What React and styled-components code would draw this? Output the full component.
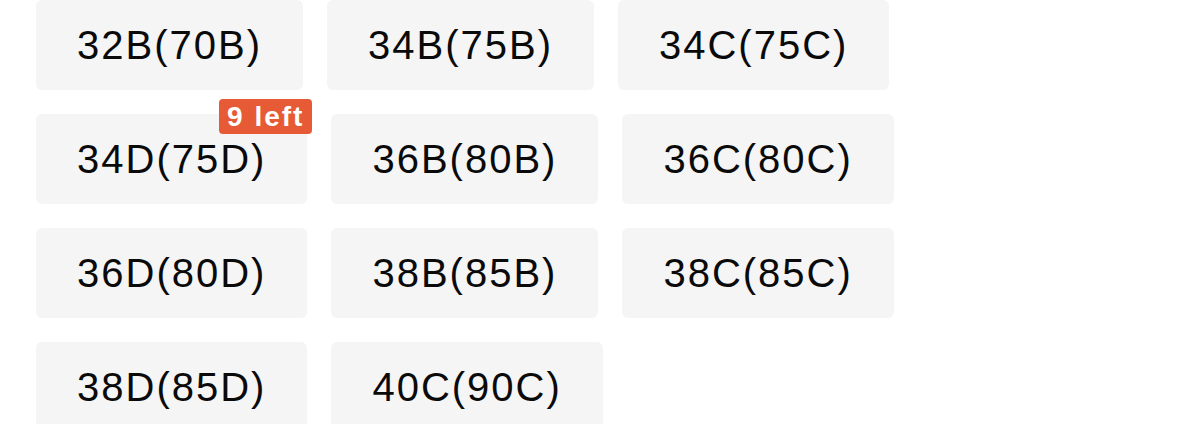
import styled, { createGlobalStyle } from 'styled-components';

const GlobalStyle = createGlobalStyle`
  body {
    margin: 0;
    background: #ffffff;
    font-family: "Liberation Sans", Arial, sans-serif;
  }
`;

const SizeGrid = styled.div`
  display: flex;
  flex-wrap: wrap;
  align-content: flex-start;
  gap: 24px 24px;
  padding: 0 0 0 36px;
  width: 900px;
`;

const SizeChip = styled.button`
  position: relative;
  height: 90px;
  padding: 0 41px;
  border: none;
  border-radius: 6px;
  background: #f5f5f5;
  color: #0a0a0a;
  font-family: "Liberation Sans", Arial, sans-serif;
  font-size: 40px;
  letter-spacing: 2px;
  display: flex;
  align-items: center;
  justify-content: center;
  cursor: pointer;
`;

const StockBadge = styled.span`
  position: absolute;
  top: -15px;
  right: -5px;
  height: 35px;
  padding: 0 8px;
  border-radius: 4px;
  background: #e65b36;
  color: #ffffff;
  font-size: 28px;
  font-weight: 700;
  letter-spacing: 2px;
  display: flex;
  align-items: center;
`;

const sizes = [
  { label: '32B(70B)' },
  { label: '34B(75B)' },
  { label: '34C(75C)' },
  { label: '34D(75D)', stock: 9 },
  { label: '36B(80B)' },
  { label: '36C(80C)' },
  { label: '36D(80D)' },
  { label: '38B(85B)' },
  { label: '38C(85C)' },
  { label: '38D(85D)' },
  { label: '40C(90C)' },
];

export default function App() {
  return (
    <>
      <GlobalStyle />
      <SizeGrid>
        {sizes.map((s) => (
          <SizeChip key={s.label}>
            {s.label}
            {s.stock && <StockBadge>{s.stock} left</StockBadge>}
          </SizeChip>
        ))}
      </SizeGrid>
    </>
  );
}
